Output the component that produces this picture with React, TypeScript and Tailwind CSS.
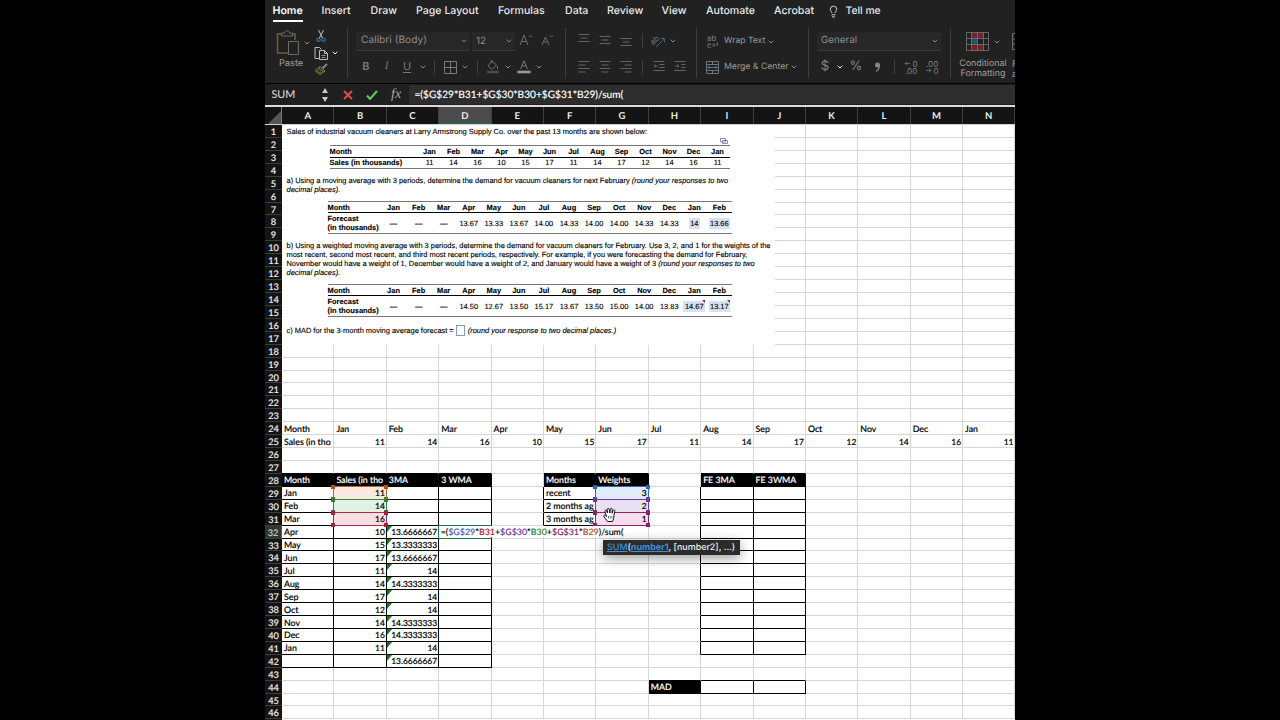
import React from "react";
import { ChevronDown, Lightbulb } from "lucide-react";

const COLS = "ABCDEFGHIJKLMN".split("");
const ROWS = Array.from({ length: 46 }, (_, i) => i + 1);
const MONTHS = ["Jan", "Feb", "Mar", "Apr", "May", "Jun", "Jul", "Aug", "Sep", "Oct", "Nov", "Dec", "Jan"];
const SALES = ["11", "14", "16", "10", "15", "17", "11", "14", "17", "12", "14", "16", "11"];
const MA = ["13.6666667", "13.3333333", "13.6666667", "14", "14.3333333", "14", "14", "14.3333333", "14.3333333", "14", "13.6666667"];

const values: Record<string, string> = {
  A24: "Month", A25: "Sales (in tho",
  A28: "Month", B28: "Sales (in tho", C28: "3MA", D28: "3 WMA",
  F28: "Months", G28: "Weights", F29: "recent", F30: "2 months ag", F31: "3 months ag",
  G29: "3", G30: "2", G31: "1", I28: "FE 3MA", J28: "FE 3WMA", H44: "MAD",
};
MONTHS.forEach((m, i) => {
  values[COLS[i + 1] + "24"] = m;
  values[COLS[i + 1] + "25"] = SALES[i];
  values["A" + (29 + i)] = m;
  values["B" + (29 + i)] = SALES[i];
});
MA.forEach((v, i) => (values["C" + (32 + i)] = v));

const marks: Record<string, { fill: string; line: string; dot: string }> = {
  B29: { fill: "bg-[#fae9e0]", line: "border-[#c0602c]", dot: "bg-[#b9501c]" },
  B30: { fill: "bg-[#e2f1e3]", line: "border-[#2b8a3c]", dot: "bg-[#1f8433]" },
  B31: { fill: "bg-[#f5dfe3]", line: "border-[#ab2c44]", dot: "bg-[#a8213c]" },
  G29: { fill: "bg-[#e0ecf8]", line: "border-[#3566b8]", dot: "bg-[#2e62b8]" },
  G30: { fill: "bg-[#e9e0f4]", line: "border-[#7238a4]", dot: "bg-[#6f35a5]" },
  G31: { fill: "bg-[#f4dfec]", line: "border-[#93226e]", dot: "bg-[#8c1f6b]" },
};

const between = (n: number, a: number, b: number) => n >= a && n <= b;

function isHeader(c: string, r: number) {
  return (r === 28 && "ABCDFGIJ".includes(c)) || (r === 44 && c === "H");
}

function Cell({ c, r }: { c: string; r: number }) {
  const id = c + r;
  const header = isHeader(c, r);
  const right =
    (between(r, 29, 42) && "ABCD".includes(c)) || (between(r, 29, 31) && "EFG".includes(c)) ||
    (between(r, 29, 41) && "HIJ".includes(c)) || (r === 44 && "IJ".includes(c)) || header;
  const bottom =
    (between(r, 29, 42) && "ABCD".includes(c)) || (between(r, 29, 31) && "FG".includes(c)) ||
    (between(r, 29, 41) && "IJ".includes(c)) || (between(r, 43, 44) && "IJ".includes(c)) || header ||
    (r === 27 && "ABCDFGIJ".includes(c)) || (r === 43 && c === "H");
  const text = values[id];
  const numeric = text !== undefined && /^[\d.]+$/.test(text);
  const mark = marks[id];
  return (
    <div
      className={
        "relative flex min-w-0 items-center border-r border-b pl-[2px] " +
        (right ? "border-r-black " : "border-r-[#d6d6d6] ") +
        (bottom ? "border-b-black " : "border-b-[#d6d6d6] ") +
        (header ? "bg-black text-white " : mark ? mark.fill + " text-black " : "text-black ") +
        (numeric ? "justify-end pr-[1px] text-[8.450px]" : "justify-start")
      }
    >
      {text && <span className="pt-px whitespace-nowrap leading-[12px]">{text}</span>}
      {c === "C" && between(r, 32, 42) && (
        <svg className="absolute top-0 left-0 h-[6px] w-[5px]" viewBox="0 0 5 6"><path d="M0 0h5L0 6z" fill="#137a1c" /></svg>
      )}
      {mark && (
        <div className={"absolute -top-px -right-px -bottom-px -left-px z-10 border " + mark.line}>
          <i className={"absolute -top-[2px] -left-[3px] size-[4px] " + mark.dot} />
          <i className={"absolute -top-[2px] -right-[2px] size-[4px] " + mark.dot} />
          <i className={"absolute -bottom-[2px] -left-[3px] size-[4px] " + mark.dot} />
          <i className={"absolute -right-[2px] -bottom-[2px] size-[4px] " + mark.dot} />
        </div>
      )}
      {id === "D32" && (
        <>
          <div className="absolute -top-px -right-px -bottom-px -left-px border border-[#1f7a45]" />
          <div className="absolute top-0 left-0 z-10 h-[11px] bg-white pl-[1.500px] text-[8.850px] leading-[12px] whitespace-nowrap [-webkit-text-stroke:0.1px]">
            =(<span className="text-[#3c66b4]">$G$29</span>*<span className="text-[#a8213c]">B31</span>+
            <span className="text-[#6f35a5]">$G$30</span>*<span className="text-[#1f8433]">B30</span>+
            <span className="text-[#8c1f6b]">$G$31</span>*<span className="text-[#b9501c]">B29</span>)/sum(
          </div>
        </>
      )}
    </div>
  );
}

function Chev({ bright }: { bright?: boolean }) {
  return <ChevronDown size={8} strokeWidth={3} className={bright ? "shrink-0 text-[#f0f0f0]" : "shrink-0 text-[#8a8a8a]"} />;
}
const Rule = () => <div className="h-[14px] w-px bg-[#414141]" />;
const Split = () => <div className="my-auto h-[50px] w-px shrink-0 bg-[#3d3d3d]" />;

function Lines({ d }: { d: string }) {
  return <svg width="12" height="14" viewBox="0 0 12 14" stroke="#646464" fill="none"><path d={d} /></svg>;
}

function Ribbon() {
  return (
    <div className="flex h-[61px] shrink-0 text-[10px] text-[#8d8d8d]">
      <div className="flex w-[82px] shrink-0 pl-[11px]">
        <div className="flex w-[36px] flex-col pt-[8px]">
          <div className="flex items-center gap-[3px]">
            <svg width="24" height="26" viewBox="0 0 24 26" fill="none">
              <path d="M6 4H1.500v19H12M16 4h3v6" stroke="#77592c" strokeWidth="1.500" />
              <path d="M5.500 6V3h3c0-3 5-3 5 0h3v3z" stroke="#686868" />
              <path d="M12.500 11.500h10v13h-10z" fill="#222" stroke="#6b6b6b" />
            </svg>
            <Chev />
          </div>
          <span className="pt-[2px] pl-[3px] text-[9.200px] leading-[12px] text-[#a0a0a0]">Paste</span>
        </div>
        <div className="ml-[2px] flex flex-col pt-[6px]">
          <div className="flex h-[15px] items-center pl-[2px]">
            <svg width="10" height="14" viewBox="0 0 10 14" fill="none">
              <path d="M2.500 1l4 8M7.500 1l-4 8" stroke="#c0c0c0" />
              <circle cx="2.500" cy="10.800" r="1.700" stroke="#3f88ba" /><circle cx="7.500" cy="10.800" r="1.700" stroke="#3f88ba" />
            </svg>
          </div>
          <div className="flex h-[20px] items-center gap-[2px]">
            <svg width="15" height="15" viewBox="0 0 15 15" fill="none" stroke="#bdbdbd">
              <path d="M5 12.500H1V1.500h4.500l2 2M5.500 4.500h5l3 3v6h-8zM10.500 4.500v3h3" /><path d="M7.500 9.500h4M7.500 11.500h4" strokeWidth=".7" />
            </svg>
            <Chev bright />
          </div>
          <svg width="14" height="13" viewBox="0 0 14 13" fill="none">
            <path d="M13 1L8.500 5.500" stroke="#858585" strokeWidth="2" /><path d="M6 3.500l5 4.500-1.500 1.200-5-4.500z" stroke="#858585" />
            <path d="M4.500 5L1 7.500l5 4 3.500-2.500zM3 8.500l2-1M5 10l2-1" stroke="#8b7c35" />
          </svg>
        </div>
      </div>
      <Split />
      <div className="grid w-[217px] shrink-0 grid-rows-[26px_26px] content-start pt-[6px] pl-[8px]">
        <div className="flex items-center">
          <div className="flex h-[19px] w-[114px] items-center justify-between border-b border-[#3a3a3a] bg-[#272727] pt-px pr-[2px] pl-[5px] text-[10.200px]"><span>Calibri (Body)</span><Chev /></div>
          <div className="ml-[2px] flex h-[19px] w-[43px] items-center justify-between border-b border-[#3a3a3a] bg-[#272727] pt-px pr-[2px] pl-[4px] text-[10px]"><span>12</span><Chev /></div>
          <svg width="14" height="14" viewBox="0 0 14 14" className="ml-[4px]" fill="none" stroke="#6c6c6c"><path d="M1 11L5 1l4 10M2.500 7.500h5M10 3l1.500-1.500L13 3" /></svg>
          <svg width="13" height="14" viewBox="0 0 13 14" className="ml-[8px]" fill="none" stroke="#6c6c6c"><path d="M1 11l3.500-8L8 11M2.500 8h4M9 1.500L10.500 3 12 1.500" /></svg>
        </div>
        <div className="grid grid-cols-[20px_21px_20px_11px_12px_20px_10px_14px_18px_11px_22px_8px] items-center justify-items-center text-[11px] text-[#777]">
          <b className="-mt-px font-semibold">B</b><i className="-mt-px font-['Liberation_Serif']">I</i><span className="-mt-px underline underline-offset-2">U</span><Chev /><Rule />
          <svg width="13" height="13" viewBox="0 0 13 13" fill="none" stroke="#7a7a7a"><path d="M.5.5h12v12H.5zM6.500.5v12M.5 6.500h12" /></svg>
          <Chev /><Rule />
          <svg width="14" height="14" viewBox="0 0 14 14" fill="none" stroke="#707070"><path d="M6 1L2 6l4 3.500L10.500 5zM4.500 0l2 3M11.500 6v3" /><path d="M1 12h12" strokeWidth="2.500" stroke="#4a4a4a" /></svg>
          <Chev />
          <svg width="14" height="14" viewBox="0 0 14 14" fill="none" stroke="#777"><path d="M3.500 9L7 .8 10.500 9M4.800 6h4.400" /><path d="M.5 12h13" strokeWidth="2.600" stroke="#9b9b9b" /></svg>
          <Chev />
        </div>
      </div>
      <Split />
      <div className="grid w-[130px] shrink-0 grid-cols-[21px_21px_21px_12px_21px_21px] grid-rows-[26px_26px] content-start items-center justify-items-center pt-[6px] pl-[7px]">
        <Lines d="M.5 .5h11M2.500 4h7M.5 7.500h11" />
        <Lines d="M.5 2.500h11M2.500 6h7M.5 9.500h11" />
        <Lines d="M.5 4.500h11M2.500 8h7M.5 11.500h11" />
        <Rule />
        <svg width="15" height="13" viewBox="0 0 15 13" fill="none"><text x="0" y="8" fontSize="8" fill="#7b7b7b" transform="rotate(-42 4 7)">ab</text><path d="M5 12l8-8M9.500 3.500h4v4" stroke="#3d6477" /></svg>
        <div className="-ml-[13px]"><Chev /></div>
        <Lines d="M.5 1.500h11M.5 5h7M.5 8.500h11M.5 12h7" />
        <Lines d="M.5 1.500h11M2.500 5h7M.5 8.500h11M2.500 12h7" />
        <Lines d="M.5 1.500h11M4.500 5h7M.5 8.500h11M4.500 12h7" />
        <Rule />
        <Lines d="M.5 1.500h11M6.500 4.500h5M6.500 7.500h5M.5 10.500h11M5 6H1M2.500 4.500L1 6l1.500 1.500" />
        <Lines d="M.5 1.500h11M7.500 4.500h4M7.500 7.500h4M.5 10.500h11M1 6h4M3.500 4.500L5 6 3.500 7.500" />
      </div>
      <Split />
      <div className="grid w-[111px] shrink-0 grid-rows-[26px_26px] content-start pt-[6px] pl-[9px] text-[9px] whitespace-nowrap text-[#9a9a9a]">
        <div className="flex items-center pt-px">
          <svg width="13" height="13" viewBox="0 0 13 13" fill="none"><text x="1" y="6" fontSize="8" fill="#808080">ab</text><text x="1" y="12.500" fontSize="8" fill="#808080">c</text><path d="M11.500 7v3H7M8.500 8L6.500 10l2 2" stroke="#3d7288" /></svg>
          <span className="ml-[5px] w-[43px] text-[8.600px]">Wrap Text</span><Chev />
        </div>
        <div className="flex items-center">
          <svg width="13" height="13" viewBox="0 0 13 13" fill="none"><path d="M.5.5h12v12H.5zM.5 3.500h12M.5 9.500h12M6.500.5v3M6.500 9.500v3" stroke="#747474" /><path d="M2 6.500h9M3.500 5L2 6.500 3.500 8M9.500 5L11 6.500 9.500 8" stroke="#41839a" /></svg>
          <span className="ml-[5px] w-[66px] pt-px text-[8.700px]">Merge &amp; Center</span><Chev />
        </div>
      </div>
      <Split />
      <div className="grid w-[141px] shrink-0 grid-rows-[26px_26px] content-start pt-[6px] pl-[8px]">
        <div className="flex items-center">
          <div className="flex h-[19px] w-[124px] items-center justify-between border-b border-[#3a3a3a] bg-[#272727] pt-px pr-[2px] pl-[4px] text-[9.800px]"><span>General</span><Chev /></div>
        </div>
        <div className="grid grid-cols-[16px_14px_18px_24px_10px_24px_18px] items-center justify-items-center text-[13px] text-[#858585]">
          <span>$</span><Chev bright /><span>%</span>
          <svg width="7" height="11" viewBox="0 0 7 11"><circle cx="3.500" cy="3" r="2.500" fill="#858585" /><path d="M5.500 3c0 3-1 5-3.500 6.500" stroke="#858585" strokeWidth="1.300" fill="none" /></svg>
          <Rule />
          <svg width="14" height="14" viewBox="0 0 14 14"><g fill="#858585" fontSize="8"><text x="8.500" y="6.500">0</text><text x="1" y="13.500">.00</text></g><path d="M6 3.500H1M3 1.500l-2 2 2 2" stroke="#3d7288" fill="none" /></svg>
          <svg width="14" height="14" viewBox="0 0 14 14"><g fill="#858585" fontSize="8"><text x="1" y="6.500">.00</text><text x="8.500" y="13.500">0</text></g><path d="M1 10.500h5M4 8.500l2 2-2 2" stroke="#3d7288" fill="none" /></svg>
        </div>
      </div>
      <Split />
      <div className="flex w-[61px] shrink-0 flex-col pt-[10px]">
        <div className="flex items-center gap-[4px] pl-[15px]">
          <svg width="23" height="19" viewBox="0 0 23 19" fill="none"><path d="M5 1h12v5H5zM5 12h12v6H5z" fill="#6d252b" /><path d="M5 6h6v6H5z" fill="#25506f" /><path d="M.5.5h22v18H.5zM5.500.5v18M17.500.5v18M.5 6.500h22M.5 12.500h22M11.500.5v18" stroke="#6e6e6e" strokeWidth=".9" /></svg>
          <Chev />
        </div>
        <div className="flex flex-col items-center pt-[8px] pl-[3px] text-[8.900px] leading-[10px] text-[#a0a0a0]"><span>Conditional</span><span>Formatting</span></div>
      </div>
      <div className="flex w-[3px] shrink-0 flex-col items-start overflow-hidden pt-[11px] text-[8.900px] leading-[10px] text-[#a0a0a0]">
        <svg width="22" height="17" viewBox="0 0 22 17" fill="none" stroke="#6e6e6e" className="shrink-0"><path d="M.5.5h21v16H.5zM.5 6h21M.5 11h21" /></svg>
        <span className="pt-[10px]">F</span><span>a</span>
      </div>
    </div>
  );
}

function Tabs() {
  return (
    <div className="flex h-[22px] shrink-0 pl-[7.500px] text-[10.600px] leading-[22px] font-medium whitespace-nowrap text-[#e8e8e8]">
      <div className="w-[49px]"><span className="inline-block h-[22px] border-b-2 border-white font-semibold text-white">Home</span></div>
      <span className="w-[49px]">Insert</span>
      <span className="w-[45.500px]">Draw</span>
      <span className="w-[82px]">Page Layout</span>
      <span className="w-[67px]">Formulas</span>
      <span className="w-[42px]">Data</span>
      <span className="w-[54.500px]">Review</span>
      <span className="w-[44.500px]">View</span>
      <span className="w-[68px]">Automate</span>
      <span className="w-[53px]">Acrobat</span>
      <Lightbulb size={13} strokeWidth={1.600} className="mt-[5px]" />
      <span className="ml-[5.500px] text-[10.300px]">Tell me</span>
    </div>
  );
}

function FormulaBar() {
  return (
    <div className="flex h-[22px] shrink-0 items-center border-t border-black bg-[#1f1f1f] font-[Lato] text-white">
      <span className="w-[56px] pt-px pl-[6.500px] text-[10.800px] text-[#e0e0e0]">SUM</span>
      <svg width="8" height="16" viewBox="0 0 8 16" fill="#c9c9c9"><path d="M4 1l3 5H1zM4 15l3-5H1z" /></svg>
      <svg width="10" height="10" viewBox="0 0 10 10" className="ml-[14px]" stroke="#dc4a50" strokeWidth="2"><path d="M1 1l8 8M9 1L1 9" /></svg>
      <svg width="12" height="10" viewBox="0 0 12 10" className="ml-[13px]" fill="none" stroke="#61cf59" strokeWidth="2"><path d="M1 5.500L4 9l7-8" /></svg>
      <span className="ml-[13px] w-[18px] pt-px font-['Liberation_Serif'] text-[14px] leading-none text-[#a5a5a5] italic">fx</span>
      <div className="flex h-[19px] flex-1 items-center bg-[#2d2d2d] pt-[3px] pl-[5.500px] text-[10.150px] [-webkit-text-stroke:0.15px]">=($G$29*B31+$G$30*B30+$G$31*B29)/sum(</div>
    </div>
  );
}

function SalesTable() {
  return (
    <div className="ml-[47.500px] w-[400px] border-t border-b border-[#777]">
      <div className="grid h-[11.500px] grid-cols-[88px_repeat(13,24px)] items-center border-b border-black font-bold">
        <span>Month</span>
        {MONTHS.map((m, i) => <span key={i} className="text-center">{m}</span>)}
      </div>
      <div className="grid h-[10.500px] grid-cols-[88px_repeat(13,24px)] items-center">
        <b className="whitespace-nowrap">Sales (in thousands)</b>
        {SALES.map((m, i) => <span key={i} className="text-center">{m}</span>)}
      </div>
    </div>
  );
}

function ForecastTable({ data, flagged }: { data: string[]; flagged?: boolean }) {
  return (
    <div className="ml-[45.500px] w-[404.500px] border-t border-b border-[#777]">
      <div className="grid h-[11px] grid-cols-[53.500px_repeat(14,25.070px)] items-center border-b border-black font-bold">
        <span>Month</span>
        {[...MONTHS, "Feb"].map((m, i) => <span key={i} className="text-center">{m}</span>)}
      </div>
      <div className="grid h-[20px] grid-cols-[53.500px_repeat(14,25.070px)] items-center">
        <b className="leading-[9px] whitespace-nowrap">Forecast<br />(in thousands)</b>
        {data.map((v, i) => (
          <span key={i} className="flex justify-center">
            <span className={i > 11 ? "relative bg-[#d7e1f1] px-[1.500px] leading-[11px]" : ""}>
              {v}
              {flagged && i > 11 && <svg className="absolute -top-px right-0 size-[3px]" viewBox="0 0 3 3"><path d="M0 0h3v3z" fill="#a12030" /></svg>}
            </span>
          </span>
        ))}
      </div>
    </div>
  );
}

function Problem() {
  return (
    <div className="absolute top-0 left-[17px] z-10 flex h-[220px] w-[493px] flex-col bg-white font-['Liberation_Sans'] text-[7.440px] leading-[9px] font-normal whitespace-nowrap text-black [-webkit-text-stroke:0.12px]">
      <p className="h-[13px] pt-[2px] pl-[4.500px]">Sales of industrial vacuum cleaners at Larry Armstrong Supply Co. over the past 13 months are shown below:</p>
      <div className="flex h-[7px] justify-end pr-[47px]">
        <svg width="8" height="6" viewBox="0 0 8 6" fill="#fff" stroke="#6c6ea8" strokeWidth=".8"><path d="M2.500 2.500h5v3h-5zM.5.5h5v3.500h-5z" /></svg>
      </div>
      <SalesTable />
      <p className="mt-[7px] h-[25px] pl-[4.500px]">a) Using a moving average with 3 periods, determine the demand for vacuum cleaners for next February <i>(round your responses to two<br />decimal places).</i></p>
      <ForecastTable data={["—", "—", "—", "13.67", "13.33", "13.67", "14.00", "14.33", "14.00", "14.00", "14.33", "14.33", "14", "13.66"]} />
      <p className="mt-[7px] h-[43px] pl-[4.500px]">
        b) Using a weighted moving average with 3 periods, determine the demand for vacuum cleaners for February. Use 3, 2, and 1 for the weights of the<br />
        most recent, second most recent, and third most recent periods, respectively. For example, if you were forecasting the demand for February,<br />
        November would have a weight of 1, December would have a weight of 2, and January would have a weight of 3 <i>(round your responses to two<br />decimal places).</i>
      </p>
      <ForecastTable flagged data={["—", "—", "—", "14.50", "12.67", "13.50", "15.17", "13.67", "13.50", "15.00", "14.00", "13.83", "14.67", "13.17"]} />
      <p className="mt-[8px] flex items-center pl-[4.500px]">c) MAD for the 3-month moving average forecast =<span className="mr-[3px] ml-[2px] h-[11px] w-[9px] border border-[#7d9cc0]" /><i>(round your response to two decimal places.)</i></p>
    </div>
  );
}

function Sheet() {
  return (
    <div className="relative flex w-[750px] flex-1 overflow-hidden bg-white font-[Lato] text-[8.800px] font-medium [-webkit-text-stroke:0.15px]">
      <div className="grid w-[17px] shrink-0 auto-rows-[12.930px] bg-[#141414] text-center text-[9.200px] leading-[14px] text-[#ededed]">
        {ROWS.map((r) => (
          <div key={r} className={r === 32 ? "border-r border-b border-r-[#27804b] border-b-[#3c3c3c] bg-[#303633] text-[#b9d6c4]" : "border-b border-[#3c3c3c]"}>{r}</div>
        ))}
      </div>
      <div className="grid shrink-0 auto-rows-[12.930px] grid-cols-[repeat(14,52.400px)]">
        {ROWS.map((r) => COLS.map((c) => <Cell key={c + r} c={c} r={r} />))}
      </div>
      <Problem />
      <div className="absolute top-[415px] left-[338px] z-20 flex h-[15px] w-[137px] items-center bg-[#2b2b2b] pl-[4px] font-[Inter] text-[8.950px] whitespace-nowrap text-[#eee] shadow-[0_3px_12px_rgba(0,0,0,0.4)] [-webkit-text-stroke:0px]">
        <span className="text-[#3f8fdc] underline">SUM</span>(<b className="font-bold text-[#3f8fdc] underline">number1</b>, [number2], ...)
      </div>
      <svg className="absolute top-[382px] left-[337px] z-20" width="16" height="16" viewBox="0 0 16 16" fill="#fff" stroke="#111" strokeWidth="1" strokeLinejoin="round">
        <path d="M5.500 14.500L2 9.800c-1-1.400.5-2.200 1.500-1.100l1 1L3 4.500c-.4-1.400 1.200-1.900 1.700-.5L5.500 6 5.200 2.500c0-1.500 1.700-1.500 2 0L7.800 6 8.300 2.200c.3-1.400 1.900-1.200 1.900.3L10 6.200l1.100-2.700c.6-1.200 2-.7 1.700.7L11.900 8.500c-.2 2.500-.3 4-1.400 6z" />
        <path d="M6.500 9v2.500M8.200 9v2.500M9.900 9v2.500" strokeWidth=".6" />
      </svg>
    </div>
  );
}

export default function App() {
  return (
    <div className="flex h-[720px] w-[1280px] justify-center overflow-hidden bg-black font-[Inter] [text-rendering:geometricPrecision]">
      <div className="flex h-[720px] w-[750px] flex-col overflow-hidden bg-[#212121]">
        <Tabs />
        <Ribbon />
        <FormulaBar />
        <div className="flex h-[20px] shrink-0 overflow-hidden border-t-2 border-b border-t-[#dedada] border-b-[#d0d0d0] bg-[#141414]">
          <div className="flex w-[17px] shrink-0 items-end justify-end border-r border-[#777]">
            <svg width="13" height="13" viewBox="0 0 13 13"><path d="M13 0v13H0z" fill="#555" /></svg>
          </div>
          {COLS.map((c) => (
            <div key={c} className={"w-[52.400px] shrink-0 border-r border-[#404040] text-center font-[Lato] text-[9.500px] leading-[20px] font-bold text-[#ececec] " + (c === "D" ? "border-b border-b-[#217346] bg-[#4b4b4b]" : "")}>{c}</div>
          ))}
        </div>
        <Sheet />
      </div>
    </div>
  );
}
